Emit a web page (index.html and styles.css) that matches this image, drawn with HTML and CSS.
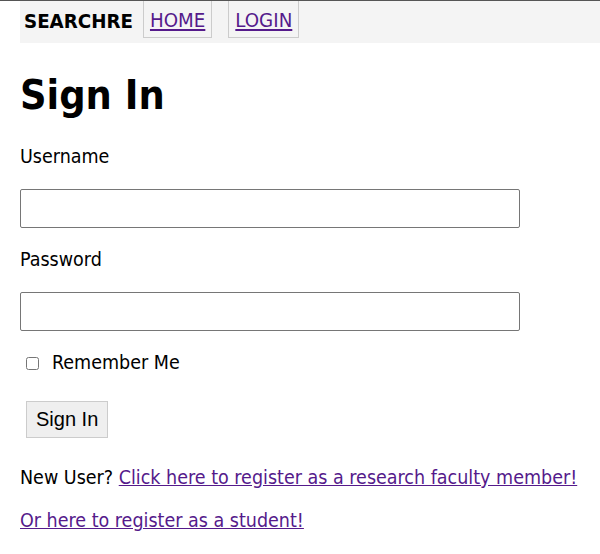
FILE: index.html
```html
<!DOCTYPE html>
<html>
<head>
<meta charset="utf-8">
<link rel="stylesheet" href="styles.css">
</head>
<body>
<div class="topline"></div>
<nav class="nav">
  <span class="brand">SEARCHRE</span>
  <a class="nav-item" href="#">HOME</a>
  <a class="nav-item" href="#">LOGIN</a>
</nav>
<main class="content">
  <h1 class="title">Sign In</h1>
  <form class="form">
    <label class="label" for="u">Username</label>
    <input class="field" id="u" type="text">
    <label class="label" for="p">Password</label>
    <input class="field" id="p" type="password">
    <label class="remember"><input type="checkbox" class="check"> Remember Me</label>
    <div class="actions"><button type="button" class="btn">Sign In</button></div>
  </form>
  <p class="line">New User? <a href="#">Click here to register as a research faculty member!</a></p>
  <p class="line second"><a href="#">Or here to register as a student!</a></p>
</main>
</body>
</html>
```
FILE: styles.css
```css
html, body { margin: 0; padding: 0; background: #fff; }
body {
  font-family: "DejaVu Sans Condensed", "DejaVu Sans", sans-serif;
  font-size: 19.5px;
  line-height: 24px;
  color: #000;
}
a { color: #551a8b; }
.topline { height: 1px; background: #555; }
.nav {
  display: flex;
  align-items: flex-start;
  margin-left: 20px;
  height: 42px;
  background: #f4f4f4;
  font-size: 20.3px;
}
.brand {
  font-weight: bold;
  padding: 8px 10px 0 4px;
}
.nav-item {
  border: 1px solid #ccc;
  border-top: none;
  padding: 7px 6px 5px 6px;
  margin-right: 16px;
}
.content { padding: 0 20px; }
.title {
  font-size: 41px;
  margin: 28px 0 26px;
  line-height: 48px;
}
.form { display: flex; flex-direction: column; align-items: flex-start; }
.label { margin-bottom: 20px; }
.field {
  width: 500px;
  height: 39px;
  box-sizing: border-box;
  border: 1px solid #767676;
  border-radius: 2px;
  margin: 0 0 20px;
  font-size: 18px;
}
.remember { display: flex; align-items: center; margin: 0 0 0 6px; }
.check { margin: 0 13px 0 0; width: 13px; height: 13px; }
.actions { margin: 26px 0 0 6px; }
.btn {
  font-family: "Liberation Sans", Arial, sans-serif;
  font-size: 20px;
  background: #efefef;
  border: 1px solid #ccc;
  padding: 0 9px;
  height: 37px;
  border-radius: 0;
}
.line { margin: 28px 0 0; }
.line.second { margin-top: 19px; }
```
